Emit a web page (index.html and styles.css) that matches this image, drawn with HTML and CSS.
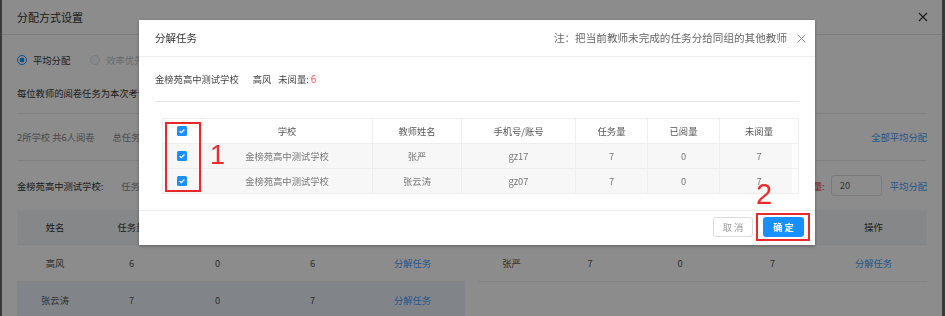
FILE: index.html
```html
<!DOCTYPE html>
<html lang="zh-CN">
<head>
<meta charset="utf-8">
<title>分配方式设置</title>
<link rel="stylesheet" href="styles.css">
</head>
<body>
<div class="page">
  <div class="bg-head">
    <span class="bg-title">分配方式设置</span>
    <svg class="bg-close" width="10" height="10" viewBox="0 0 10 10"><path d="M1 1L9 9M9 1L1 9" stroke="#333" stroke-width="1.1" fill="none"/></svg>
  </div>
  <div class="bg-body">
    <div class="radios">
      <span class="radio on"></span><span class="radio-label">平均分配</span>
      <span class="radio off"></span><span class="radio-label dis">效率优先</span>
    </div>
    <div class="desc">每位教师的阅卷任务为本次考试总任务量除以阅卷教师人数，平均分配到每一位阅卷教师</div>
    <div class="stat">
      <span class="stat-a">2所学校 共6人阅卷</span>
      <span class="stat-b">总任务量: 20 已阅量: 0 未阅量: 20</span>
      <span class="grow"></span>
      <span class="link">全部平均分配</span>
    </div>
    <div class="school">
      <span class="school-name">金榜苑高中测试学校:</span>
      <span class="stat-b">任务总量: 20 已阅量: 0 未阅量: 20</span>
      <span class="grow"></span>
      <span class="red-label">未分配量:</span>
      <span class="input">20</span>
      <span class="link">平均分配</span>
    </div>
    <div class="tables">
      <div class="tbl tbl-left">
        <div class="tr th"><span>姓名</span><span>任务量</span><span>已阅量</span><span>未阅量</span><span>操作</span></div>
        <div class="tr"><span>高风</span><span>6</span><span>0</span><span>6</span><span class="link">分解任务</span></div>
        <div class="tr hover"><span>张云涛</span><span>7</span><span>0</span><span>7</span><span class="link">分解任务</span></div>
      </div>
      <div class="tbl tbl-right">
        <div class="tr th"><span>姓名</span><span>任务量</span><span>已阅量</span><span>未阅量</span><span>操作</span></div>
        <div class="tr"><span>张严</span><span>7</span><span>0</span><span>7</span><span class="link">分解任务</span></div>
      </div>
    </div>
  </div>
</div>

<div class="mask"></div>

<div class="modal">
  <div class="m-head">
    <span class="m-title">分解任务</span>
    <span class="grow"></span>
    <span class="m-note">注：把当前教师未完成的任务分给同组的其他教师</span>
    <svg class="m-close" width="9" height="9" viewBox="0 0 9 9"><path d="M0.5 0.5L8.5 8.5M8.5 0.5L0.5 8.5" stroke="#888" stroke-width="1" fill="none"/></svg>
  </div>
  <div class="m-body">
    <div class="m-info">
      <span>金榜苑高中测试学校</span>
      <span class="m-teacher">高风</span>
      <span>未阅量: <em class="num-red">6</em></span>
    </div>
    <div class="m-table">
      <div class="m-tr m-th">
        <span class="cb-cell"><svg class="cb" width="10" height="10" viewBox="0 0 10 10"><rect width="10" height="10" rx="1.5" fill="#1890ff"/><path d="M2.6 5.1L4.3 6.7L7.4 3.5" stroke="#fff" stroke-width="1.3" fill="none"/></svg></span>
        <span>学校</span><span>教师姓名</span><span>手机号/账号</span><span>任务量</span><span>已阅量</span><span>未阅量</span>
      </div>
      <div class="m-tr m-td">
        <span class="cb-cell"><svg class="cb" width="10" height="10" viewBox="0 0 10 10"><rect width="10" height="10" rx="1.5" fill="#1890ff"/><path d="M2.6 5.1L4.3 6.7L7.4 3.5" stroke="#fff" stroke-width="1.3" fill="none"/></svg></span>
        <span>金榜苑高中测试学校</span><span>张严</span><span>gz17</span><span>7</span><span>0</span><span>7</span>
      </div>
      <div class="m-tr m-td last">
        <span class="cb-cell"><svg class="cb" width="10" height="10" viewBox="0 0 10 10"><rect width="10" height="10" rx="1.5" fill="#1890ff"/><path d="M2.6 5.1L4.3 6.7L7.4 3.5" stroke="#fff" stroke-width="1.3" fill="none"/></svg></span>
        <span>金榜苑高中测试学校</span><span>张云涛</span><span>gz07</span><span>7</span><span>0</span><span>7</span>
      </div>
    </div>
  </div>
  <div class="m-foot">
    <span class="btn btn-cancel">取 消</span>
    <span class="mark-box"><span class="btn btn-ok">确 定</span></span>
  </div>
  <div class="mark-col"></div>
  <span class="anno anno-1">1</span>
  <span class="anno anno-2">2</span>
</div>
</body>
</html>
```

FILE: styles.css
```css
html, body {
  margin: 0;
  padding: 0;
}
body {
  width: 945px;
  height: 316px;
  overflow: hidden;
  font-family: "Noto Sans CJK SC", "Noto Sans", sans-serif;
  font-size: 9.3px;
  color: #333;
  background: #fff;
}
em { font-style: normal; }
.grow { flex: 1; }

/* background page */
.page {
  height: 316px;
  border-left: 2px solid #6a6a6a;
  border-right: 3px solid #6a6a6a;
  background: #fff;
  box-sizing: border-box;
}
.bg-head {
  height: 34px;
  border-bottom: 1px solid #e4e4e4;
  display: flex;
  align-items: center;
  justify-content: space-between;
  padding: 0 14px 0 15px;
}
.bg-title { font-size: 11px; color: #333; line-height: 14px; }
.bg-body { padding: 0 15px; }
.radios {
  height: 50px;
  display: flex;
  align-items: center;
}
.radio {
  width: 10px;
  height: 10px;
  border-radius: 50%;
  box-sizing: border-box;
  border: 1px solid #dcdfe6;
  background: #fff;
}
.radio.on {
  border-color: #1890ff;
  background: radial-gradient(circle, #1890ff 0 2.3px, #fff 2.6px);
}
.radio.off { margin-left: 20px; background: #f5f7fa; }
.radio-label { margin-left: 6px; line-height: 14px; color: #333; }
.radio-label.dis { color: #c0c4cc; }
.desc {
  line-height: 16px;
  padding-bottom: 12px;
  border-bottom: 1px solid #e8e8e8;
  white-space: nowrap;
  overflow: hidden;
}
.stat {
  height: 46px;
  display: flex;
  align-items: center;
  border-bottom: 1px solid #e8e8e8;
  line-height: 14px;
}
.stat-a { color: #888; }
.stat-b { color: #888; margin-left: 18px; }
.link { color: #409eff; }
.school {
  height: 49px;
  display: flex;
  align-items: center;
  line-height: 14px;
}
.school-name { color: #333; }
.red-label { color: #e23c3c; }
.input {
  width: 51px;
  height: 21px;
  box-sizing: border-box;
  border: 1px solid #dcdfe6;
  border-radius: 3px;
  margin-left: 6px;
  margin-right: 8px;
  padding-left: 8px;
  line-height: 19px;
  color: #606266;
}
.tables {
  display: flex;
  gap: 13px;
}
.tbl { line-height: 14px; }
.tbl-left { width: 448px; }
.tbl-right { width: 449px; }
.tr {
  display: grid;
  height: 36px;
  align-items: center;
  border-bottom: 1px solid #ebeef5;
  color: #555;
  text-align: center;
}
.tbl-left .tr { grid-template-columns: 76px 77px 95px 95px 105px; }
.tbl-right .tr { grid-template-columns: 67px 90px 90px 95px 107px; }
.tr.th { height: 34px; background: #f5f6f8; color: #333; }
.tr.hover { background: #ecf3fb; }

/* overlay */
.mask {
  position: fixed;
  inset: 0;
  background: rgba(0, 0, 0, 0.45);
}

/* modal */
.modal {
  position: fixed;
  left: 139px;
  top: 20px;
  width: 676px;
  height: 225px;
  background: #fff;
  box-shadow: 0 1px 3px rgba(0, 0, 0, 0.35);
  display: flex;
  flex-direction: column;
}
.m-head {
  height: 36px;
  flex: none;
  display: flex;
  align-items: center;
  padding: 0 9px 0 16px;
  border-bottom: 1px solid #efefef;
}
.m-title { font-size: 10.5px; color: #333; line-height: 14px; }
.m-note { font-size: 10.6px; color: #666; line-height: 14px; }
.m-close { margin-left: 10px; }
.m-body { padding: 0 16px; flex: 1; }
.m-info {
  height: 44px;
  display: flex;
  align-items: center;
  border-bottom: 1px solid #e8e8e8;
  color: #444;
  line-height: 14px;
}
.m-teacher { margin-left: 14px; margin-right: 7px; }
.num-red { color: #f5504e; font-size: 10px; }
.m-table {
  margin-top: 16px;
  margin-left: 7px;
  width: 637px;
  border: 1px solid #eee;
  border-bottom: none;
  box-sizing: border-box;
}
.m-tr {
  display: grid;
  grid-template-columns: 39px 171px 89px 114px 72px 72px 78px;
  height: 24px;
  border-bottom: 1px solid #eee;
  line-height: 24px;
  text-align: center;
}
.m-tr > span { border-right: 1px solid #eee; height: 24px; }
.m-tr > span:last-child { border-right: none; }
.m-th { color: #555; background: #fff; }
.m-td {
  color: #777;
  background: linear-gradient(to right, #f7f7f7 calc(100% - 6px), #fff calc(100% - 6px));
}
.cb-cell { display: flex; align-items: center; justify-content: center; }
.cb { display: block; }

.m-foot {
  flex: none;
  border-top: 1px solid #eee;
  padding: 2px 5px 4px 0;
  display: flex;
  justify-content: flex-end;
  align-items: center;
  gap: 3px;
}
.btn {
  display: flex;
  align-items: center;
  justify-content: center;
  height: 20px;
  box-sizing: border-box;
  border-radius: 3px;
  font-size: 9.3px;
  line-height: 14px;
}
.btn-cancel {
  width: 40px;
  border: 1px solid #dcdcdc;
  color: #999;
  background: #fff;
}
.mark-box {
  display: block;
  border: 2px solid #e8282a;
  padding: 2px 4px 2px 5px;
}
.btn-ok {
  width: 41px;
  background: #1890ff;
  color: #fff;
  font-weight: 700;
}

.mark-col {
  position: absolute;
  left: 26px;
  top: 102px;
  width: 36px;
  height: 70px;
  border: 2px solid #e8282a;
  box-sizing: border-box;
}
.anno {
  position: absolute;
  font-family: "Liberation Sans", sans-serif;
  color: #ee2a2a;
  line-height: 1;
}
.anno-1 { left: 71px; top: 122px; font-size: 27px; }
.anno-2 { left: 617px; top: 160px; font-size: 29px; }
```
